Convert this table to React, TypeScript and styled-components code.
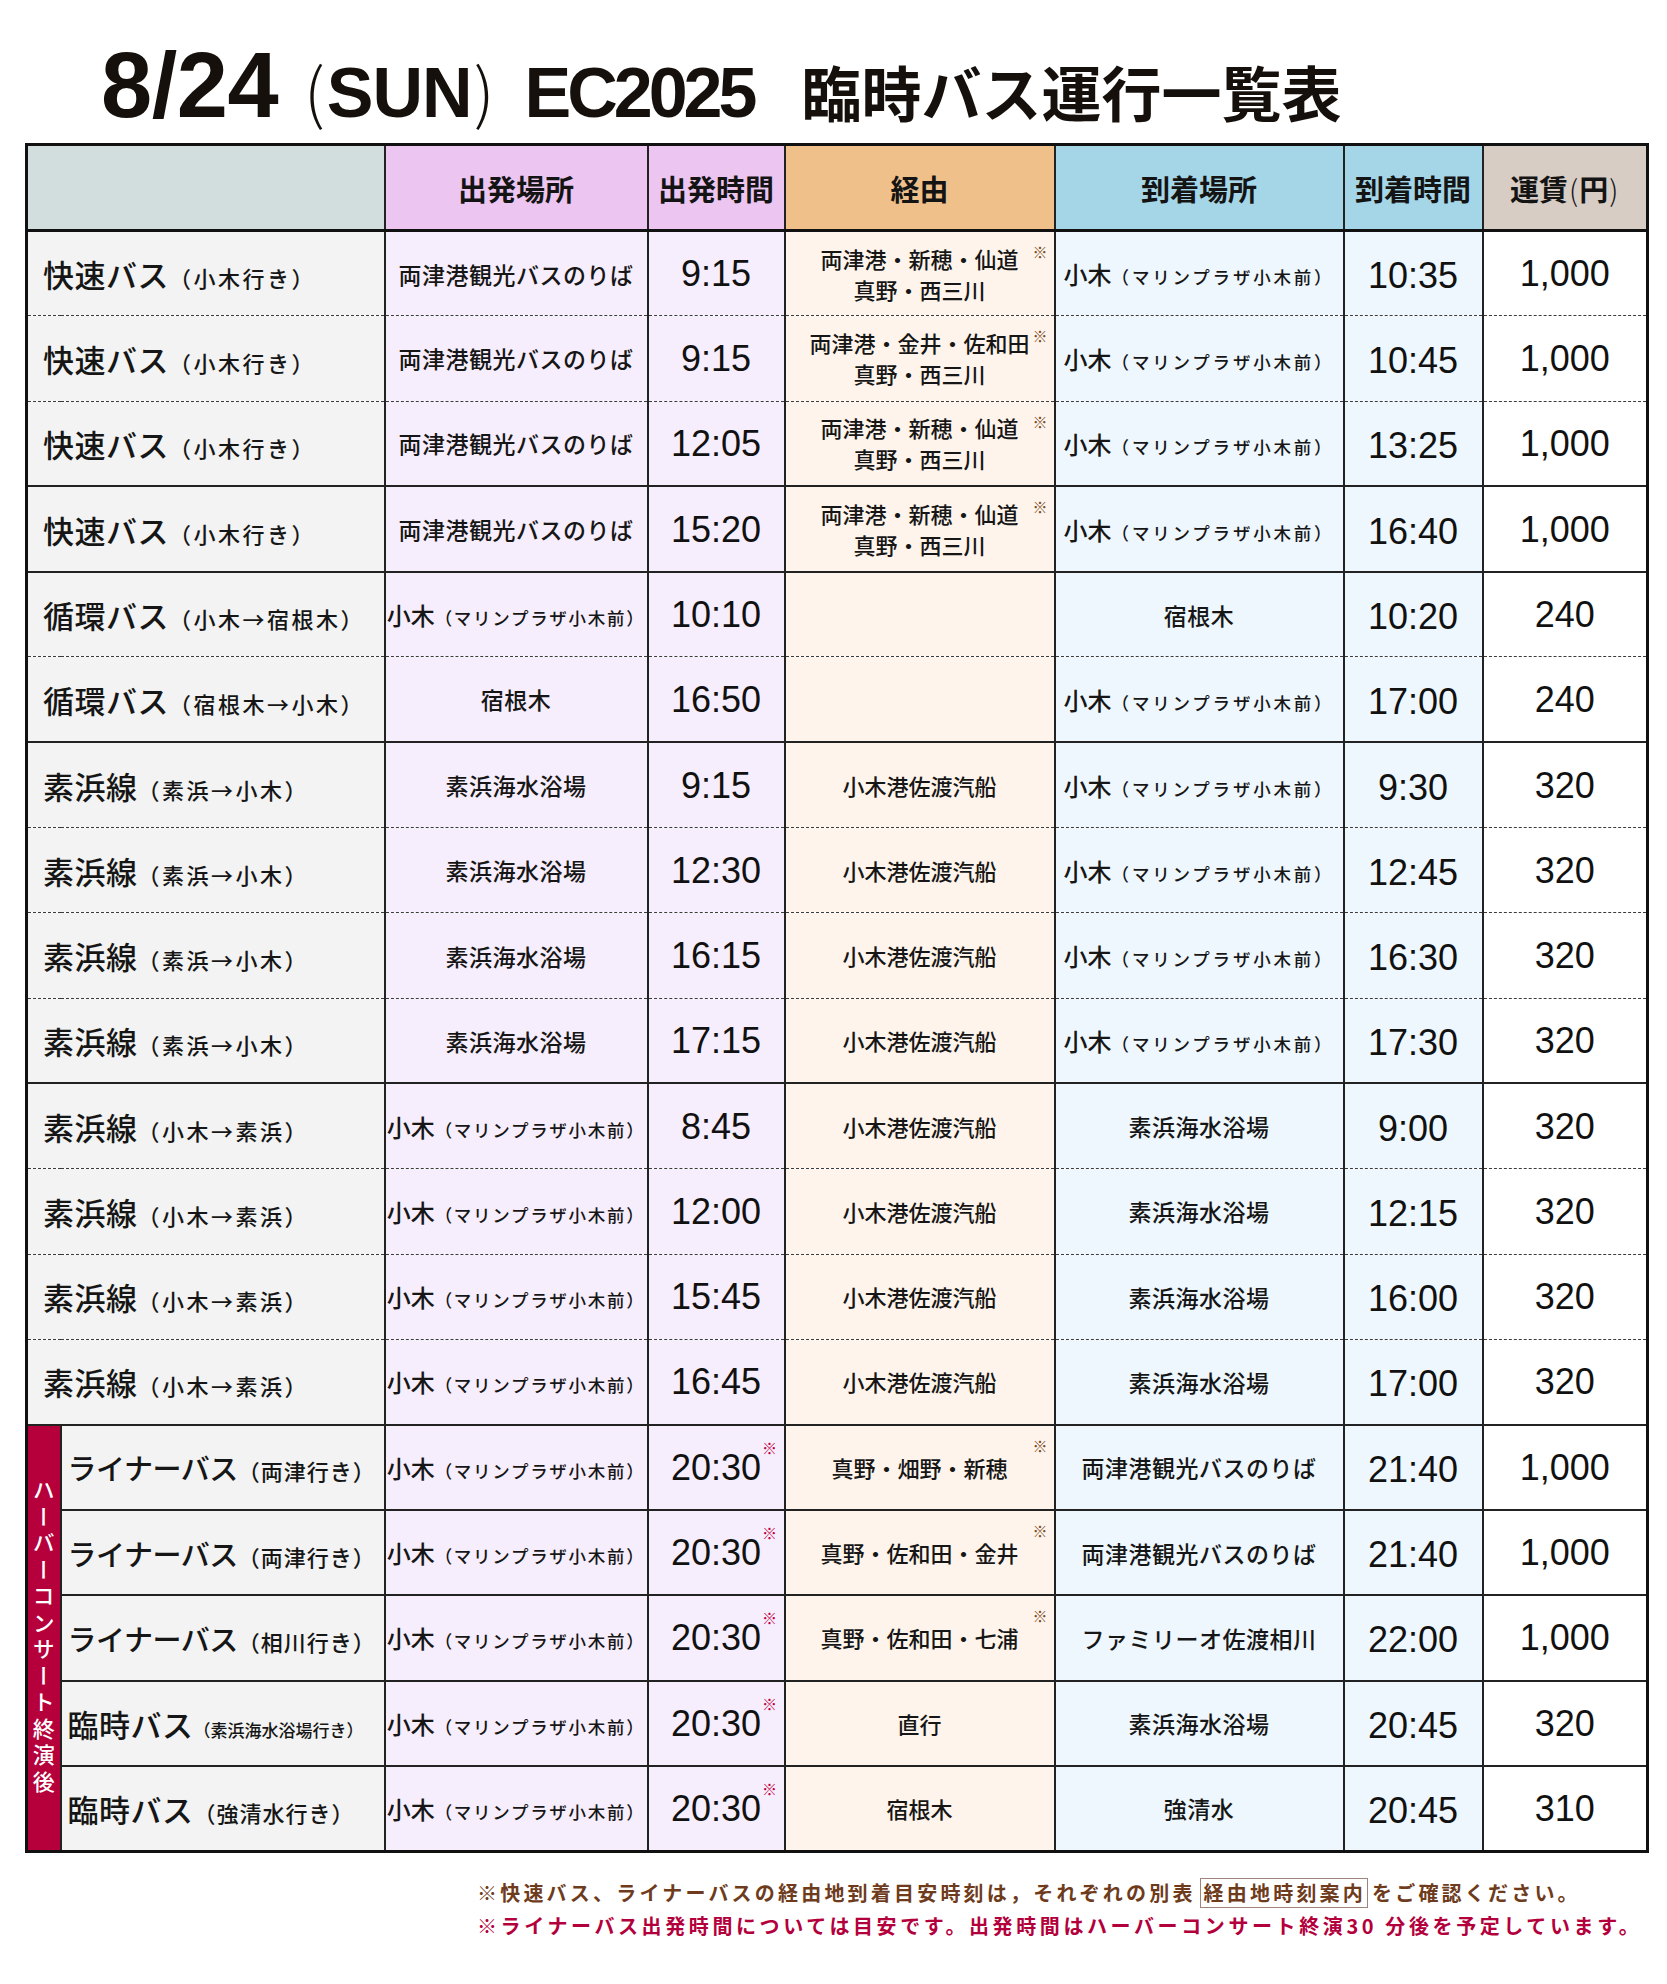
import React from 'react'
import styled, { createGlobalStyle } from 'styled-components'

const JA = `"Noto Sans CJK JP", "Noto Sans", sans-serif`
const NUM = `"Liberation Sans", Arial, sans-serif`

const GlobalStyle = createGlobalStyle`
  body {
    margin: 0;
    background: #fff;
    color: #111;
    font-family: ${JA};
  }
`

const Page = styled.div`
  width: 1667px;
  padding: 0 0 40px 25px;
  box-sizing: border-box;
`

const Title = styled.h1`
  display: flex;
  align-items: baseline;
  margin: 39px 0 14px 76px;
  height: 90px;
  line-height: 1;
  color: #15100c;
  font-weight: 700;
`

const TitleDate = styled.span`
  font-family: ${NUM};
  font-size: 92px;
  letter-spacing: -0.5px;
`

const TitleDay = styled.span`
  font-family: ${NUM};
  font-size: 70px;
  letter-spacing: -1px;
  margin-left: 24px;

  i {
    font-style: normal;
    font-family: ${JA};
    font-weight: 300;
    font-size: 66px;
    letter-spacing: 0;
    margin: 0 2px;
  }
`

const TitleEvent = styled.span`
  font-family: ${NUM};
  font-size: 70px;
  letter-spacing: -4px;
  margin-left: 28px;
`

const TitleJa = styled.span`
  font-family: ${JA};
  font-size: 60px;
  margin-left: 48px;
`

const Table = styled.table`
  width: 1621px;
  table-layout: fixed;
  border-collapse: collapse;
  border: 3px solid #111;
`

const HeadRow = styled.tr`
  height: 86px;

  & > th {
    border-bottom: 3px solid #111;
  }
`

const HeadCell = styled.th<{ $bg: string }>`
  background: ${(p) => p.$bg};
  border-left: 2px solid #222;
  font-family: ${JA};
  font-size: 29px;
  font-weight: 700;
  color: #141414;
  padding: 0;
  white-space: nowrap;
`

const ThinParen = styled.span`
  font-weight: 300;
  margin: 0 1px;
`

const Row = styled.tr<{ $line: 'dashed' | 'solid' }>`
  height: 85.3px;

  & > td {
    border-bottom: ${(p) => (p.$line === 'dashed' ? '1.5px dashed #3c3c3c' : '2px solid #222')};
  }
`

const Cell = styled.td<{ $bg: string }>`
  position: relative;
  background: ${(p) => p.$bg};
  border-left: 2px solid #222;
  padding: 0;
  text-align: center;
  vertical-align: middle;
  white-space: nowrap;
  color: #161616;
`

const LabelCell = styled(Cell)<{ $inset?: boolean }>`
  text-align: left;
  padding-left: ${(p) => (p.$inset ? '6px' : '15px')};
`

const LabelMain = styled.span<{ $tight?: boolean }>`
  font-size: ${(p) => (p.$tight ? '29px' : '31px')};
  font-weight: 500;
  letter-spacing: ${(p) => (p.$tight ? '-0.5px' : '0.5px')};
`

const LabelSub = styled.span<{ $size: number; $spacing: number }>`
  font-size: ${(p) => p.$size}px;
  letter-spacing: ${(p) => p.$spacing}px;
  font-weight: 500;
`

const Band = styled.td`
  background: #b5003b;
  border-left: none;
  padding: 0;
  vertical-align: middle;
  text-align: center;
`

const BandText = styled.div`
  writing-mode: vertical-rl;
  margin: 0 auto;
  color: #fff;
  font-size: 22px;
  font-weight: 500;
  letter-spacing: 4.5px;
  line-height: 1;
`

const Place = styled.span`
  font-size: 23px;
  font-weight: 500;
  letter-spacing: 0.5px;
`

const PlaceBig = styled.span`
  font-size: 24px;
  font-weight: 500;
`

const PlaceSmall = styled.span<{ $tight?: boolean }>`
  font-size: 17.5px;
  font-weight: 500;
  letter-spacing: ${(p) => (p.$tight ? '1.7px' : '2.8px')};
`

const Time = styled.span<{ $drop?: boolean }>`
  position: relative;
  display: inline-block;
  font-family: ${NUM};
  font-size: 36px;
  color: #111;
  padding-top: ${(p) => (p.$drop ? '5px' : '1px')};
`

const TimeMark = styled.span`
  position: absolute;
  left: 100%;
  top: -9px;
  margin-left: 1px;
  font-family: ${JA};
  font-size: 15px;
  color: #c0003f;
`

const ViaLines = styled.div`
  font-size: 22px;
  font-weight: 500;
  line-height: 31px;
`

const ViaMark = styled.span`
  position: absolute;
  top: 9px;
  right: 6px;
  font-size: 15px;
  color: #7a4a26;
`

const Notes = styled.div`
  margin: 23px 0 0 452px;
  font-size: 20px;
  font-weight: 700;
  line-height: 33px;
  white-space: nowrap;
`

const NoteLine = styled.div<{ $color: string; $spacing?: number }>`
  color: ${(p) => p.$color};
  letter-spacing: ${(p) => p.$spacing ?? 3.2}px;
`

const NoteBox = styled.span`
  display: inline-block;
  border: 1.5px solid #9e847a;
  line-height: 28px;
  padding: 0 1px 0 3px;
  margin: 0 4px;
`

const C = {
  label: '#f2f3f2',
  dep: '#f6eefc',
  via: '#fef4eb',
  arr: '#eef7fd',
  fare: '#ffffff',
}

type Line = 'dashed' | 'solid'

type Bus = {
  name: string
  sub: string
  subSize?: number
  dep: string
  depT: string
  via: string[]
  arr: string
  arrT: string
  fare: string
  line: Line
  viaMark?: boolean
  timeMark?: boolean
}

const KOKI = 'koki'

const rapidVia1 = ['両津港・新穂・仙道', '真野・西三川']
const rapidVia2 = ['両津港・金井・佐和田', '真野・西三川']
const PORT = '両津港観光バスのりば'
const BEACH = '素浜海水浴場'
const FERRY = ['小木港佐渡汽船']

const regular: Bus[] = [
  { name: '快速バス', sub: '（小木行き）', dep: PORT, depT: '9:15', via: rapidVia1, viaMark: true, arr: KOKI, arrT: '10:35', fare: '1,000', line: 'dashed' },
  { name: '快速バス', sub: '（小木行き）', dep: PORT, depT: '9:15', via: rapidVia2, viaMark: true, arr: KOKI, arrT: '10:45', fare: '1,000', line: 'dashed' },
  { name: '快速バス', sub: '（小木行き）', dep: PORT, depT: '12:05', via: rapidVia1, viaMark: true, arr: KOKI, arrT: '13:25', fare: '1,000', line: 'solid' },
  { name: '快速バス', sub: '（小木行き）', dep: PORT, depT: '15:20', via: rapidVia1, viaMark: true, arr: KOKI, arrT: '16:40', fare: '1,000', line: 'solid' },
  { name: '循環バス', sub: '（小木→宿根木）', dep: KOKI, depT: '10:10', via: [], arr: '宿根木', arrT: '10:20', fare: '240', line: 'dashed' },
  { name: '循環バス', sub: '（宿根木→小木）', dep: '宿根木', depT: '16:50', via: [], arr: KOKI, arrT: '17:00', fare: '240', line: 'solid' },
  { name: '素浜線', sub: '（素浜→小木）', dep: BEACH, depT: '9:15', via: FERRY, arr: KOKI, arrT: '9:30', fare: '320', line: 'dashed' },
  { name: '素浜線', sub: '（素浜→小木）', dep: BEACH, depT: '12:30', via: FERRY, arr: KOKI, arrT: '12:45', fare: '320', line: 'dashed' },
  { name: '素浜線', sub: '（素浜→小木）', dep: BEACH, depT: '16:15', via: FERRY, arr: KOKI, arrT: '16:30', fare: '320', line: 'dashed' },
  { name: '素浜線', sub: '（素浜→小木）', dep: BEACH, depT: '17:15', via: FERRY, arr: KOKI, arrT: '17:30', fare: '320', line: 'solid' },
  { name: '素浜線', sub: '（小木→素浜）', dep: KOKI, depT: '8:45', via: FERRY, arr: BEACH, arrT: '9:00', fare: '320', line: 'dashed' },
  { name: '素浜線', sub: '（小木→素浜）', dep: KOKI, depT: '12:00', via: FERRY, arr: BEACH, arrT: '12:15', fare: '320', line: 'dashed' },
  { name: '素浜線', sub: '（小木→素浜）', dep: KOKI, depT: '15:45', via: FERRY, arr: BEACH, arrT: '16:00', fare: '320', line: 'dashed' },
  { name: '素浜線', sub: '（小木→素浜）', dep: KOKI, depT: '16:45', via: FERRY, arr: BEACH, arrT: '17:00', fare: '320', line: 'solid' },
]

const concert: Bus[] = [
  { name: 'ライナーバス', sub: '（両津行き）', dep: KOKI, depT: '20:30', timeMark: true, via: ['真野・畑野・新穂'], viaMark: true, arr: PORT, arrT: '21:40', fare: '1,000', line: 'solid' },
  { name: 'ライナーバス', sub: '（両津行き）', dep: KOKI, depT: '20:30', timeMark: true, via: ['真野・佐和田・金井'], viaMark: true, arr: PORT, arrT: '21:40', fare: '1,000', line: 'solid' },
  { name: 'ライナーバス', sub: '（相川行き）', dep: KOKI, depT: '20:30', timeMark: true, via: ['真野・佐和田・七浦'], viaMark: true, arr: 'ファミリーオ佐渡相川', arrT: '22:00', fare: '1,000', line: 'solid' },
  { name: '臨時バス', sub: '（素浜海水浴場行き）', subSize: 17, dep: KOKI, depT: '20:30', timeMark: true, via: ['直行'], arr: BEACH, arrT: '20:45', fare: '320', line: 'solid' },
  { name: '臨時バス', sub: '（強清水行き）', dep: KOKI, depT: '20:30', timeMark: true, via: ['宿根木'], arr: '強清水', arrT: '20:45', fare: '310', line: 'solid' },
]

const PlaceName = ({ value, tight }: { value: string; tight?: boolean }) =>
  value === KOKI ? (
    <span>
      <PlaceBig>小木</PlaceBig>
      <PlaceSmall $tight={tight}>（マリンプラザ小木前）</PlaceSmall>
    </span>
  ) : (
    <Place>{value}</Place>
  )

const BusCells = ({ bus }: { bus: Bus }) => (
  <>
    <Cell $bg={C.dep}>
      <PlaceName value={bus.dep} tight />
    </Cell>
    <Cell $bg={C.dep}>
      <Time>
        {bus.depT}
        {bus.timeMark && <TimeMark>※</TimeMark>}
      </Time>
    </Cell>
    <Cell $bg={C.via}>
      <ViaLines>
        {bus.via.map((v) => (
          <div key={v}>{v}</div>
        ))}
      </ViaLines>
      {bus.viaMark && <ViaMark>※</ViaMark>}
    </Cell>
    <Cell $bg={C.arr}>
      <PlaceName value={bus.arr} />
    </Cell>
    <Cell $bg={C.arr}>
      <Time $drop>{bus.arrT}</Time>
    </Cell>
    <Cell $bg={C.fare}>
      <Time>{bus.fare}</Time>
    </Cell>
  </>
)

const App = () => {
  return (
    <Page>
      <GlobalStyle />
      <Title>
        <TitleDate>8/24</TitleDate>
        <TitleDay>
          <i>(</i>SUN<i>)</i>
        </TitleDay>
        <TitleEvent>EC2025</TitleEvent>
        <TitleJa>臨時バス運行一覧表</TitleJa>
      </Title>

      <Table>
        <colgroup>
          <col style={{ width: 34 }} />
          <col style={{ width: 324 }} />
          <col style={{ width: 263 }} />
          <col style={{ width: 137 }} />
          <col style={{ width: 270 }} />
          <col style={{ width: 289 }} />
          <col style={{ width: 139 }} />
          <col style={{ width: 165 }} />
        </colgroup>
        <thead>
          <HeadRow>
            <HeadCell $bg="#d2dddd" colSpan={2} />
            <HeadCell $bg="#ecc5f1">出発場所</HeadCell>
            <HeadCell $bg="#ecc5f1">出発時間</HeadCell>
            <HeadCell $bg="#f0c08b">経由</HeadCell>
            <HeadCell $bg="#a4d6e8">到着場所</HeadCell>
            <HeadCell $bg="#a4d6e8">到着時間</HeadCell>
            <HeadCell $bg="#d8cdc4">
              運賃<ThinParen>(</ThinParen>円<ThinParen>)</ThinParen>
            </HeadCell>
          </HeadRow>
        </thead>
        <tbody>
          {regular.map((bus, i) => (
            <Row key={`r${i}`} $line={bus.line}>
              <LabelCell $bg={C.label} colSpan={2}>
                <LabelMain>{bus.name}</LabelMain>
                <LabelSub $size={22} $spacing={2.5}>
                  {bus.sub}
                </LabelSub>
              </LabelCell>
              <BusCells bus={bus} />
            </Row>
          ))}
          {concert.map((bus, i) => (
            <Row key={`c${i}`} $line={bus.line}>
              {i === 0 && (
                <Band rowSpan={concert.length}>
                  <BandText>ハーバーコンサート終演後</BandText>
                </Band>
              )}
              <LabelCell $bg={C.label} $inset>
                <LabelMain $tight={bus.name.length > 4}>{bus.name}</LabelMain>
                <LabelSub $size={bus.subSize ?? 22} $spacing={bus.subSize ? 0 : 1}>
                  {bus.sub}
                </LabelSub>
              </LabelCell>
              <BusCells bus={bus} />
            </Row>
          ))}
        </tbody>
      </Table>

      <Notes>
        <NoteLine $color="#6e3c1c">
          ※快速バス、ライナーバスの経由地到着目安時刻は，それぞれの別表<NoteBox>経由地時刻案内</NoteBox>をご確認ください。
        </NoteLine>
        <NoteLine $color="#b3003c" $spacing={3.6}>
          ※ライナーバス出発時間については目安です。出発時間はハーバーコンサート終演30 分後を予定しています。
        </NoteLine>
      </Notes>
    </Page>
  )
}

export default App
